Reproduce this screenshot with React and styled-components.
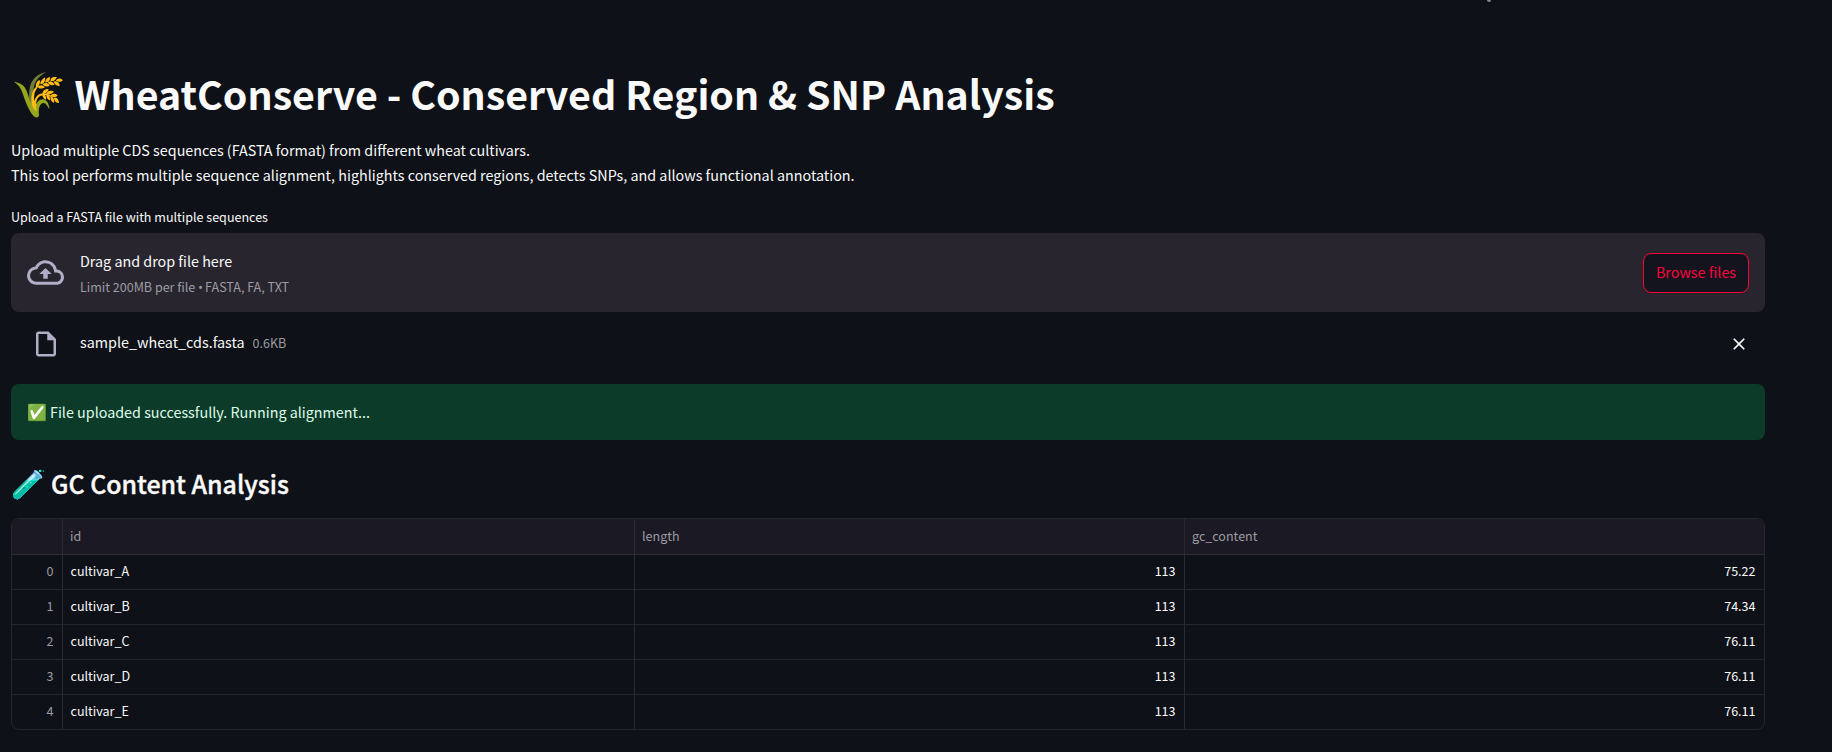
import React from "react";
import styled, { createGlobalStyle } from "styled-components";

const GlobalStyle = createGlobalStyle`
  * { box-sizing: border-box; }
  html, body { margin: 0; background: #0e1117; }
  body {
    overflow: hidden;
    color: #fafafa;
    font-family: "Source Sans Pro", "Noto Sans CJK SC", sans-serif;
    font-size: 14.33px;
    line-height: 25.6px;
  }
`;

const Page = styled.main`
  height: 752px;
  width: 1765px;
  padding: 69px 0 0 11px;
  overflow: hidden;
`;

const Speck = styled.i`
  position: absolute;
  top: -2px;
  left: 1487px;
  width: 4px;
  height: 4px;
  border-radius: 2px;
  background: #85878b;
`;

const Title = styled.h1`
  display: flex;
  align-items: center;
  margin: 0;
  height: 53px;
  font-size: 39.32px;
  font-weight: 700;
  line-height: 53px;
  white-space: nowrap;
`;

const HeadingText = styled.span`
  margin-top: -${(p) => p.$lift}px;
`;

const Emoji = styled.span`
  flex: none;
  width: ${(p) => p.$width}px;
  padding-top: ${(p) => p.$drop || 0}px;
  font-family: "Noto Color Emoji", sans-serif;
  font-size: ${(p) => p.$size}px;
  font-weight: 400;
  white-space: nowrap;
`;

const Intro = styled.p`
  margin: 15px 0 0;
  line-height: 25px;
`;

const Label = styled.label`
  display: block;
  margin-top: 19px;
  height: 24px;
  font-size: 12.54px;
  line-height: 22px;
`;

const Dropzone = styled.section`
  display: flex;
  align-items: center;
  height: 79px;
  margin-top: 3px;
  padding: 0 16px;
  background: #28252f;
  border-radius: 8px;
`;

const Icon = styled.svg`
  flex: none;
  width: ${(p) => p.$size}px;
  height: ${(p) => p.$size}px;
  fill: ${(p) => p.$color || "#b0adc6"};
`;

const DropText = styled.div`
  flex: 1;
  margin-left: 16px;
  padding-top: 2px;
`;

const Muted = styled.span`
  display: block;
  color: #9c9ca1;
  font-size: 12.54px;
`;

const Bullet = styled.span`
  display: inline-block;
  width: 4.2px;
  font-family: "Noto Sans", sans-serif;
  font-size: 12px;
  line-height: 1;
`;

const BrowseButton = styled.button`
  width: 106px;
  height: 40px;
  padding: 0 0 2px;
  border: 1px solid #ff003c;
  border-radius: 8px;
  background: #13141e;
  color: #ff003c;
  font: inherit;
`;

const FileRow = styled.div`
  display: flex;
  align-items: center;
  height: 40px;
  margin-top: 12px;
  padding: 0 16px 0 19.5px;
`;

const FileName = styled.span`
  margin: -4px 8px 0 19.5px;
`;

const FileSize = styled(Muted)`
  flex: 1;
  margin-top: -2px;
`;

const Alert = styled.div`
  display: flex;
  align-items: center;
  height: 56px;
  margin-top: 20px;
  padding: 0 16px;
  border-radius: 8px;
  background: #0d3b29;
  color: #dffde9;
`;

const Heading = styled.h2`
  display: flex;
  align-items: center;
  height: 34px;
  margin: 28px 0 16px;
  font-size: 24.9px;
  font-weight: 500;
  line-height: 34px;
  -webkit-text-stroke: 0.4px #fafafa;
`;

const Table = styled.div`
  height: 212px;
  border: 1px solid #25262e;
  border-radius: 8px;
  overflow: hidden;
  font-size: 12.54px;
`;

const Row = styled.div`
  display: grid;
  grid-template-columns: 51px 572px 550px 1fr;
  height: ${(p) => (p.$head ? 36 : 35)}px;
  background: ${(p) => (p.$head ? "#1b1923" : "transparent")};
  border-bottom: 1px solid ${(p) => (p.$head ? "#302e38" : "#25262e")};
  &:last-child { border-bottom-color: transparent; }
`;

const Cell = styled.div`
  display: flex;
  align-items: center;
  justify-content: ${(p) => (p.$right ? "flex-end" : "flex-start")};
  padding: 0 8.5px 2px ${(p) => (p.$muted ? 7 : 7.5)}px;
  color: ${(p) => (p.$muted ? "#9c9ca1" : "#fafafa")};
  border-right: 1px solid #2b2a33;
  &:last-child { border-right: 0; }
`;

const rows = [
  ["cultivar_A", "113", "75.22"],
  ["cultivar_B", "113", "74.34"],
  ["cultivar_C", "113", "76.11"],
  ["cultivar_D", "113", "76.11"],
  ["cultivar_E", "113", "76.11"],
];

export default function App() {
  return (
    <Page>
      <GlobalStyle />
      <Speck />
      <Title>
        <Emoji $size={44} $width={63.6}>🌾</Emoji>
        <HeadingText $lift={6}>WheatConserve - Conserved Region &amp; SNP Analysis</HeadingText>
      </Title>
      <Intro>
        Upload multiple CDS sequences (FASTA format) from different wheat cultivars.
        <br />
        This tool performs multiple sequence alignment, highlights conserved regions, detects SNPs, and allows functional annotation.
      </Intro>
      <Label>Upload a FASTA file with multiple sequences</Label>
      <Dropzone>
        <Icon $size={37} viewBox="0 0 24 24">
          <path d="M19.35 10.04A7.49 7.49 0 0012 4C9.11 4 6.6 5.64 5.35 8.04A5.994 5.994 0 000 14c0 3.31 2.69 6 6 6h13c2.76 0 5-2.24 5-5 0-2.64-2.05-4.78-4.65-4.96zM19 18H6c-2.21 0-4-1.79-4-4 0-2.05 1.53-3.76 3.56-3.97l1.07-.11.5-.95A5.469 5.469 0 0112 6c2.62 0 4.88 1.86 5.39 4.43l.3 1.5 1.53.11A2.98 2.98 0 0122 15c0 1.65-1.35 3-3 3zM8 13h2.55v3h2.9v-3H16l-4-4-4 4z" />
        </Icon>
        <DropText>
          Drag and drop file here
          <Muted>Limit 200MB per file <Bullet>•</Bullet> FASTA, FA, TXT</Muted>
        </DropText>
        <BrowseButton>Browse files</BrowseButton>
      </Dropzone>
      <FileRow>
        <Icon $size={30} viewBox="0 0 24 24">
          <path d="M14 2H6c-1.1 0-1.99.9-1.99 2L4 20c0 1.1.89 2 1.99 2H18c1.1 0 2-.9 2-2V8l-6-6zM6 20V4h7v5h5v11H6z" />
        </Icon>
        <FileName>sample_wheat_cds.fasta</FileName>
        <FileSize>0.6KB</FileSize>
        <Icon $size={20} $color="#fafafa" viewBox="0 0 24 24">
          <path d="M19 6.41L17.59 5 12 10.59 6.41 5 5 6.41 10.59 12 5 17.59 6.41 19 12 13.41 17.59 19 19 17.59 13.41 12z" />
        </Icon>
      </FileRow>
      <Alert>
        <Emoji $size={16} $width={23} $drop={2}>✅</Emoji>
        File uploaded successfully. Running alignment...
      </Alert>
      <Heading>
        <Emoji $size={28} $width={40}>🧪</Emoji>
        <HeadingText $lift={4}>GC Content Analysis</HeadingText>
      </Heading>
      <Table>
        <Row $head>
          <Cell />
          <Cell $muted>id</Cell>
          <Cell $muted>length</Cell>
          <Cell $muted>gc_content</Cell>
        </Row>
        {rows.map(([id, length, gc], i) => (
          <Row key={id}>
            <Cell $right $muted>{i}</Cell>
            <Cell>{id}</Cell>
            <Cell $right>{length}</Cell>
            <Cell $right>{gc}</Cell>
          </Row>
        ))}
      </Table>
    </Page>
  );
}
